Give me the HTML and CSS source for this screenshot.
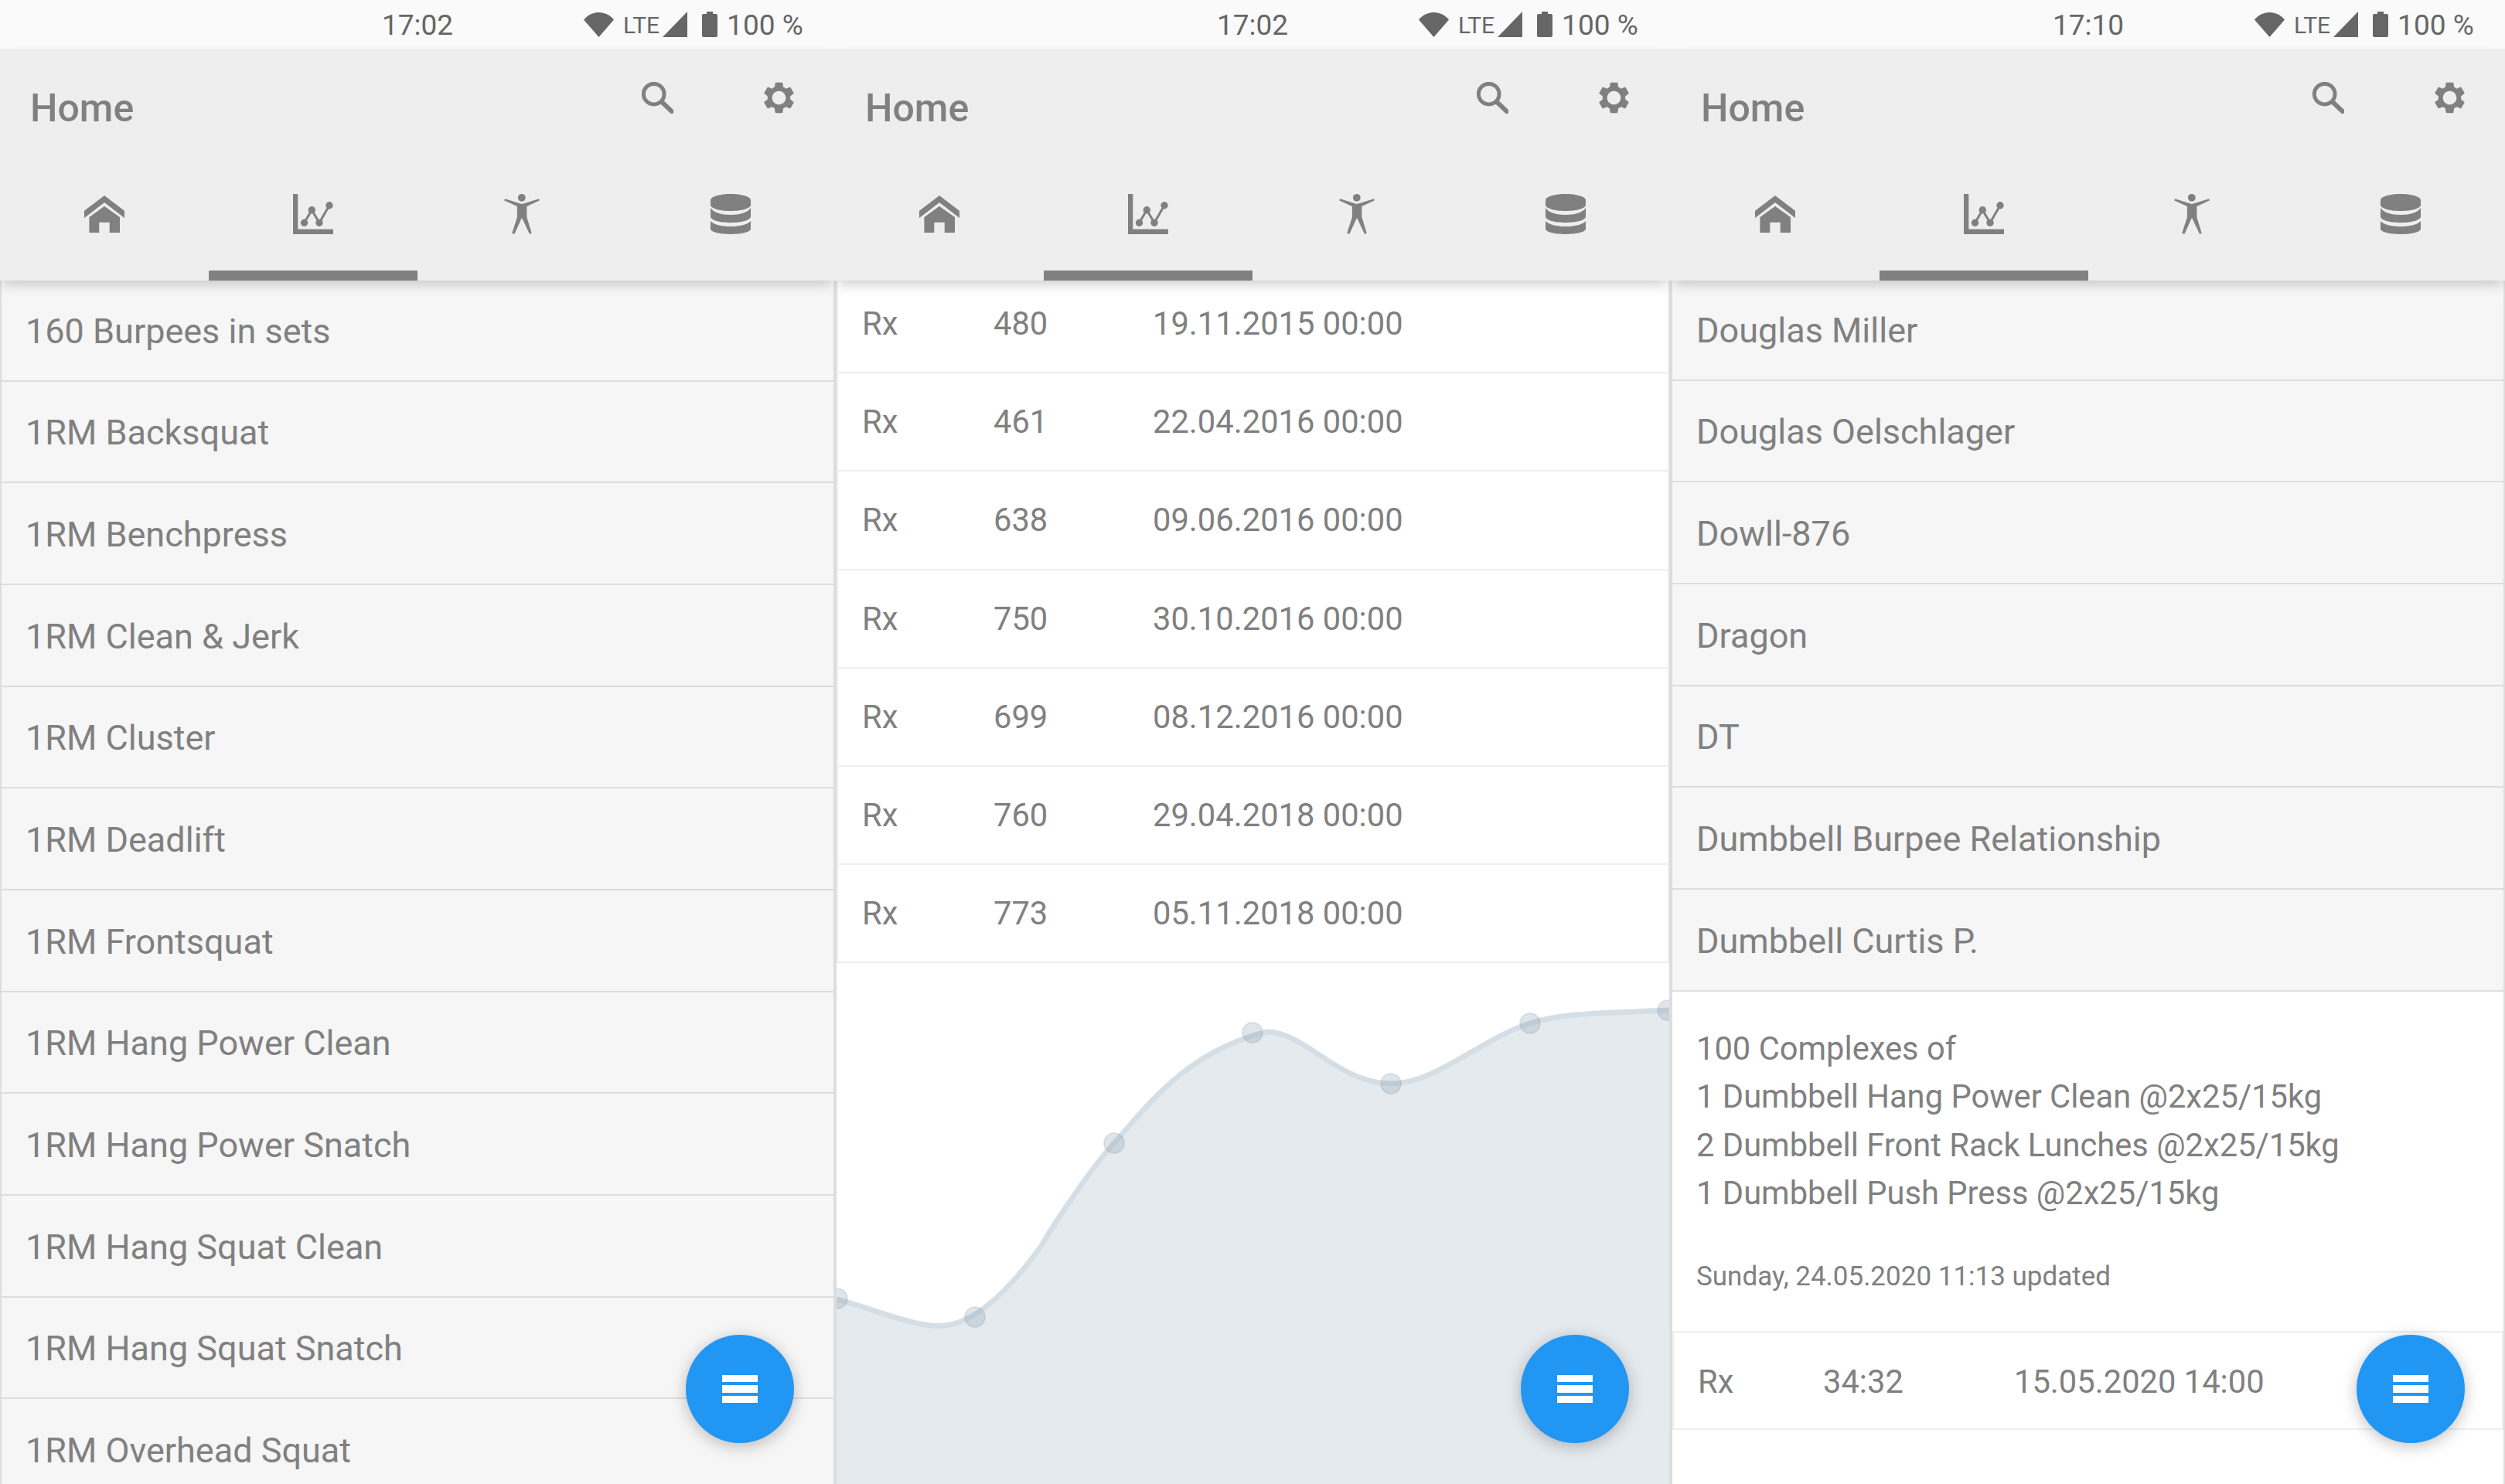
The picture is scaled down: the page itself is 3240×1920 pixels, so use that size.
FILE: index.html
```html
<!DOCTYPE html>
<html lang="en">
	<head>
		<title>Home</title>
		<meta charset="utf-8">
		<link rel="stylesheet" href="styles.css">
	</head>
	<body>
		<svg class="defs" width="0" height="0">
			<symbol id="i-wifi" viewBox="0 0 39 32"><path d="M19.5 32L0 9.5C5 3.5 12 0 19.5 0S34 3.5 39 9.5z"/></symbol>
			<symbol id="i-signal" viewBox="0 0 32 33"><path d="M32 0V33H0z"/></symbol>
			<symbol id="i-battery" viewBox="0 0 20 33"><path d="M6 0H14V3H18C19.2 3 20 3.8 20 5V31C20 32.2 19.2 33 18 33H2C.8 33 0 32.2 0 31V5C0 3.8.8 3 2 3H6z"/></symbol>
			<symbol id="i-search" viewBox="0 0 41 41"><circle cx="15.7" cy="15.7" r="13.3" fill="none" stroke="#808080" stroke-width="5"/><path d="M25 25L41 40" fill="none" stroke="#808080" stroke-width="6"/></symbol>
			<symbol id="i-gear" viewBox="2.6 2 18.8 20"><path d="M19.14 12.94c.04-.3.06-.61.06-.94 0-.32-.02-.64-.07-.94l2.03-1.58c.18-.14.23-.41.12-.61l-1.92-3.32c-.12-.22-.37-.29-.59-.22l-2.39.96c-.5-.38-1.03-.7-1.62-.94l-.36-2.54c-.04-.24-.24-.41-.48-.41h-3.84c-.24 0-.43.17-.47.41l-.36 2.54c-.59.24-1.13.57-1.62.94l-2.39-.96c-.22-.08-.47 0-.59.22L2.74 8.87c-.12.21-.08.47.12.61l2.03 1.58c-.05.3-.09.63-.09.94s.02.64.07.94l-2.03 1.58c-.18.14-.23.41-.12.61l1.92 3.32c.12.22.37.29.59.22l2.39-.96c.5.38 1.03.7 1.62.94l.36 2.54c.05.24.24.41.48.41h3.84c.24 0 .44-.17.47-.41l.36-2.54c.59-.24 1.13-.56 1.62-.94l2.39.96c.22.08.47 0 .59-.22l1.92-3.32c.12-.22.07-.47-.12-.61l-2.01-1.58zM12 16.3c-2.37 0-4.3-1.93-4.3-4.3s1.93-4.3 4.3-4.3 4.3 1.93 4.3 4.3-1.93 4.3-4.3 4.3z"/></symbol>
			<symbol id="i-home" viewBox="0 0 52 48"><path d="M26 0L52 19.7V29L26 9 0 29V19.7z"/><path d="M26 13.7L46 28V48H32.7V34.7H19.3V48H6.4V28z"/></symbol>
			<symbol id="i-chart" viewBox="0 0 52 52"><path d="M0 0H6.3V45.5H52V52H0z"/><path d="M14.5 37.3L24.3 20.7 34 37.3 47 14.7" fill="none" stroke="#808080" stroke-width="3"/><circle cx="14.5" cy="37.3" r="4.7"/><circle cx="24.3" cy="20.7" r="4.7"/><circle cx="34" cy="37.3" r="4.7"/><circle cx="47" cy="14.7" r="4.7"/></symbol>
			<symbol id="i-person" viewBox="0 0 46 52"><circle cx="22.8" cy="4.8" r="4.9"/><path d="M0 8.3L1.3 6.3 23 13 45 6.3 46 8.3 29.4 16V30L35.7 50.7 33 51.7 23 30.7 13.4 51.7 10.2 50.7 16.9 30V16z"/></symbol>
			<symbol id="i-db" viewBox="0 0 52 52"><path d="M0 8C0 3.5 11.6 0 26 0S52 3.5 52 8V14C52 18.5 40.4 22 26 22S0 18.5 0 14z"/><path d="M0 18C4 24 14 27 26 27S48 24 52 18V29C52 34 40.4 37 26 37S0 34 0 29z"/><path d="M0 35C4 39.5 14 42 26 42S48 39.5 52 35V45C52 49 40.4 52 26 52S0 49 0 45z"/></symbol>
		</svg>

		<div class="screens">
			<section class="phone">
				<div class="statusbar">
					<span class="clock">17:02</span>
					<div class="sys">
						<svg class="wifi"><use href="#i-wifi"/></svg>
						<span class="lte">LTE</span>
						<svg class="signal"><use href="#i-signal"/></svg>
						<svg class="battery"><use href="#i-battery"/></svg>
						<span class="level">100 %</span>
					</div>
				</div>
				<header class="appbar">
					<div class="toolbar">
						<h1 class="title">Home</h1>
						<svg class="search"><use href="#i-search"/></svg>
						<svg class="gear"><use href="#i-gear"/></svg>
					</div>
					<nav class="tabs">
						<div class="tab"><svg class="ic-home"><use href="#i-home"/></svg></div>
						<div class="tab active"><svg class="ic-chart"><use href="#i-chart"/></svg></div>
						<div class="tab"><svg class="ic-person"><use href="#i-person"/></svg></div>
						<div class="tab"><svg class="ic-db"><use href="#i-db"/></svg></div>
					</nav>
				</header>
				<div class="content">
					<ul class="list">
						<li>160 Burpees in sets</li>
						<li>1RM Backsquat</li>
						<li>1RM Benchpress</li>
						<li>1RM Clean &amp; Jerk</li>
						<li>1RM Cluster</li>
						<li>1RM Deadlift</li>
						<li>1RM Frontsquat</li>
						<li>1RM Hang Power Clean</li>
						<li>1RM Hang Power Snatch</li>
						<li>1RM Hang Squat Clean</li>
						<li>1RM Hang Squat Snatch</li>
						<li>1RM Overhead Squat</li>
					</ul>
				</div>
				<button class="fab"><span></span><span></span><span></span></button>
			</section>

			<section class="phone phone-mid">
				<div class="statusbar">
					<span class="clock">17:02</span>
					<div class="sys">
						<svg class="wifi"><use href="#i-wifi"/></svg>
						<span class="lte">LTE</span>
						<svg class="signal"><use href="#i-signal"/></svg>
						<svg class="battery"><use href="#i-battery"/></svg>
						<span class="level">100 %</span>
					</div>
				</div>
				<header class="appbar">
					<div class="toolbar">
						<h1 class="title">Home</h1>
						<svg class="search"><use href="#i-search"/></svg>
						<svg class="gear"><use href="#i-gear"/></svg>
					</div>
					<nav class="tabs">
						<div class="tab"><svg class="ic-home"><use href="#i-home"/></svg></div>
						<div class="tab active"><svg class="ic-chart"><use href="#i-chart"/></svg></div>
						<div class="tab"><svg class="ic-person"><use href="#i-person"/></svg></div>
						<div class="tab"><svg class="ic-db"><use href="#i-db"/></svg></div>
					</nav>
				</header>
				<div class="content content-white">
					<div class="results">
						<div class="result"><span>Rx</span><span>480</span><span>19.11.2015 00:00</span></div>
						<div class="result"><span>Rx</span><span>461</span><span>22.04.2016 00:00</span></div>
						<div class="result"><span>Rx</span><span>638</span><span>09.06.2016 00:00</span></div>
						<div class="result"><span>Rx</span><span>750</span><span>30.10.2016 00:00</span></div>
						<div class="result"><span>Rx</span><span>699</span><span>08.12.2016 00:00</span></div>
						<div class="result"><span>Rx</span><span>760</span><span>29.04.2018 00:00</span></div>
						<div class="result"><span>Rx</span><span>773</span><span>05.11.2018 00:00</span></div>
					</div>
					<svg class="chart" width="1077" height="674" viewBox="0 0 1077 674">
						<path class="chart-area" d="M0 435C50 448 105 473 140 469C175 465 215 435 264 367C290 323 335 259 359 233C400 188 450 115 557 89C605 89 650 156 717 156C775 156 830 100 897 78C940 64 990 65 1077 61V674H0z"/>
						<path class="chart-line" d="M0 435C50 448 105 473 140 469C175 465 215 435 264 367C290 323 335 259 359 233C400 188 450 115 557 89C605 89 650 156 717 156C775 156 830 100 897 78C940 64 990 65 1077 61"/>
						<circle class="chart-dot" cx="1" cy="434" r="13"/>
						<circle class="chart-dot" cx="179" cy="458" r="13"/>
						<circle class="chart-dot" cx="359" cy="233" r="13"/>
						<circle class="chart-dot" cx="538" cy="90" r="13"/>
						<circle class="chart-dot" cx="717" cy="156" r="13"/>
						<circle class="chart-dot" cx="897" cy="78" r="13"/>
						<circle class="chart-dot" cx="1075" cy="61" r="13"/>
					</svg>
				</div>
				<button class="fab"><span></span><span></span><span></span></button>
			</section>

			<section class="phone phone-last">
				<div class="statusbar">
					<span class="clock">17:10</span>
					<div class="sys">
						<svg class="wifi"><use href="#i-wifi"/></svg>
						<span class="lte">LTE</span>
						<svg class="signal"><use href="#i-signal"/></svg>
						<svg class="battery"><use href="#i-battery"/></svg>
						<span class="level">100 %</span>
					</div>
				</div>
				<header class="appbar">
					<div class="toolbar">
						<h1 class="title">Home</h1>
						<svg class="search"><use href="#i-search"/></svg>
						<svg class="gear"><use href="#i-gear"/></svg>
					</div>
					<nav class="tabs">
						<div class="tab"><svg class="ic-home"><use href="#i-home"/></svg></div>
						<div class="tab active"><svg class="ic-chart"><use href="#i-chart"/></svg></div>
						<div class="tab"><svg class="ic-person"><use href="#i-person"/></svg></div>
						<div class="tab"><svg class="ic-db"><use href="#i-db"/></svg></div>
					</nav>
				</header>
				<div class="content content-white">
					<ul class="list list-short">
						<li>Douglas Miller</li>
						<li>Douglas Oelschlager</li>
						<li>Dowll-876</li>
						<li>Dragon</li>
						<li>DT</li>
						<li>Dumbbell Burpee Relationship</li>
						<li>Dumbbell Curtis P.</li>
					</ul>
					<div class="detail">
						<p class="detail-text">100 Complexes of<br>1 Dumbbell Hang Power Clean @2x25/15kg<br>2 Dumbbell Front Rack Lunches @2x25/15kg<br>1 Dumbbell Push Press @2x25/15kg</p>
						<p class="detail-date">Sunday, 24.05.2020 11:13 updated</p>
					</div>
					<div class="results results-wide">
						<div class="result"><span>Rx</span><span>34:32</span><span>15.05.2020 14:00</span></div>
					</div>
				</div>
				<button class="fab"><span></span><span></span><span></span></button>
			</section>
		</div>
	</body>
</html>
```
FILE: styles.css
```css
body {
	margin: 0;
	background-color: #ffffff;
	color: #808080;
	font-family: Roboto, sans-serif;
}

.defs {
	display: block;
	height: 0;
}

.screens {
	display: grid;
	grid-template-columns: 1080px 1081px 1079px;
	height: 1920px;
	overflow: hidden;
}

.phone {
	position: relative;
	display: flex;
	flex-direction: column;
	height: 1920px;
	overflow: hidden;
}

/* status bar */

.statusbar {
	display: flex;
	align-items: center;
	height: 63px;
	padding-top: 2px;
	padding-left: 494px;
	background-color: #fafafa;
	color: #666666;
	font-size: 37px;
	box-sizing: border-box;
}

.clock {
	width: 261px;
}

.sys {
	display: flex;
	align-items: center;
	fill: #666666;
}

.wifi {
	width: 39px;
	height: 32px;
	margin-top: -2px;
}

.lte {
	margin-left: 12px;
	font-size: 30px;
}

.signal {
	width: 32px;
	height: 33px;
	margin-top: -2px;
	margin-left: 4px;
}

.battery {
	width: 20px;
	height: 33px;
	margin-top: -2px;
	margin-left: 19px;
}

.level {
	margin-left: 12px;
}

/* app bar */

.appbar {
	position: relative;
	z-index: 2;
	flex: none;
	height: 300px;
	background-color: #eeeeee;
	box-shadow: 0 8px 16px -4px rgba(0, 0, 0, 0.22);
	fill: #808080;
}

.toolbar {
	display: flex;
	align-items: flex-start;
	height: 150px;
	padding-top: 43px;
	padding-left: 39px;
	box-sizing: border-box;
}

.title {
	margin: 4px 0 0 0;
	width: 791px;
	font-size: 50px;
	font-weight: 500;
	line-height: 60px;
}

.search {
	width: 41px;
	height: 41px;
}

.gear {
	width: 41px;
	height: 41px;
	margin-left: 116px;
}

.tabs {
	display: flex;
	height: 150px;
}

.tab {
	display: flex;
	align-items: center;
	justify-content: center;
	width: 270px;
	height: 150px;
	padding-bottom: 10px;
	border-bottom: 13px solid transparent;
	box-sizing: border-box;
}

.tab.active {
	border-bottom-color: #808080;
}

.ic-home {
	width: 52px;
	height: 48px;
}

.ic-chart,
.ic-db {
	width: 52px;
	height: 52px;
}

.ic-person {
	width: 46px;
	height: 52px;
}

/* content */

.content {
	flex: 1;
	display: flex;
	flex-direction: column;
	min-height: 0;
	background-color: #f6f6f6;
	border-left: 2px solid #dddddd;
	border-right: 2px solid #dddddd;
	overflow: hidden;
}

.content-white {
	background-color: #ffffff;
}

.list {
	flex: none;
	margin: -1px 0 0 0;
	padding: 0;
	list-style: none;
	background-color: #f6f6f6;
}

.list li {
	display: flex;
	align-items: center;
	height: 131.67px;
	padding-top: 3px;
	padding-left: 31px;
	border-bottom: 2px solid #dddddd;
	box-sizing: border-box;
	font-size: 45px;
}

.list-short {
	margin-top: -2px;
}

.results {
	flex: none;
	margin-top: -7px;
	border-left: 2px solid #eeeeee;
	border-right: 2px solid #eeeeee;
}

.result {
	display: grid;
	grid-template-columns: 170px 206px 1fr;
	align-items: center;
	height: 127.2px;
	padding-left: 31px;
	border-bottom: 2px solid #eeeeee;
	box-sizing: border-box;
	font-size: 41.7px;
}

.results-wide {
	margin-top: 0;
	border-top: 2px solid #eeeeee;
}

.results-wide .result {
	grid-template-columns: 162px 247px 1fr;
	height: 126.5px;
	padding-top: 3px;
}

.chart {
	display: block;
	flex: none;
}

.chart-area {
	fill: #e5eaee;
}

.chart-line {
	fill: none;
	stroke: #d6dee5;
	stroke-width: 7;
}

.chart-dot {
	fill: rgba(110, 140, 165, 0.22);
	stroke: rgba(110, 140, 165, 0.18);
	stroke-width: 2;
}

.detail {
	padding: 43px 0 45px 31px;
}

.detail-text {
	margin: 0;
	font-size: 41.7px;
	line-height: 62.5px;
}

.detail-date {
	margin: 51px 0 0 0;
	font-size: 35px;
	line-height: 50px;
}

/* floating button */

.fab {
	position: absolute;
	left: 887px;
	top: 1727px;
	z-index: 3;
	display: flex;
	flex-direction: column;
	align-items: center;
	justify-content: center;
	gap: 4px;
	width: 140px;
	height: 140px;
	padding: 0;
	border: 0;
	border-radius: 50%;
	background-color: #2196f3;
	box-shadow: 0 4px 20px rgba(0, 0, 0, 0.25);
}

.fab span {
	display: block;
	width: 46px;
	height: 9.5px;
	background-color: #ffffff;
}
```
